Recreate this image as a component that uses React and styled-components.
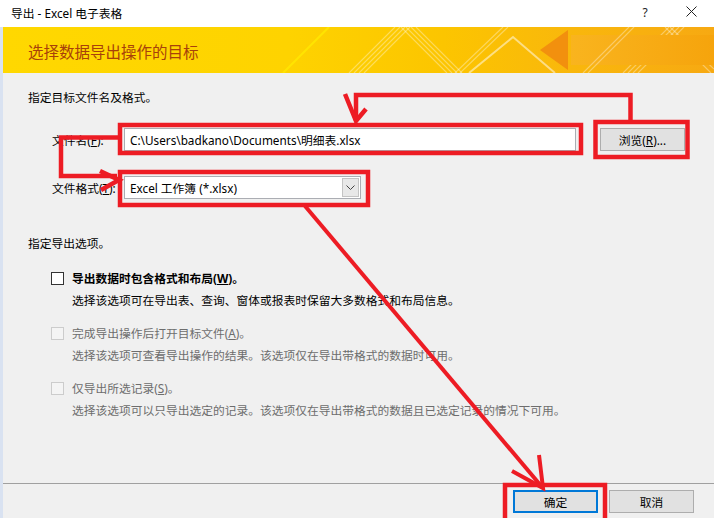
import React from 'react';
import styled, { createGlobalStyle } from 'styled-components';

const GlobalStyle = createGlobalStyle`
  html, body {
    margin: 0;
    padding: 0;
    background: #f0f0f0;
  }
  body {
    font-family: "Noto Sans", "Noto Sans CJK SC", sans-serif;
    font-size: 11.75px;
    color: #000;
  }
`;

const RED = '#ed1c24';

const options = [
  {
    label: '导出数据时包含格式和布局',
    key: 'W',
    desc: '选择该选项可在导出表、查询、窗体或报表时保留大多数格式和布局信息。',
    enabled: true,
  },
  {
    label: '完成导出操作后打开目标文件',
    key: 'A',
    desc: '选择该选项可查看导出操作的结果。该选项仅在导出带格式的数据时可用。',
    enabled: false,
  },
  {
    label: '仅导出所选记录',
    key: 'S',
    desc: '选择该选项可以只导出选定的记录。该选项仅在导出带格式的数据且已选定记录的情况下可用。',
    enabled: false,
  },
];

const App = () => {
  return (
    <Window>
      <GlobalStyle />
      <TitleBar>
        <Title>导出 - Excel 电子表格</Title>
        <TitleButtons>
          <HelpButton>?</HelpButton>
          <CloseButton>
            <svg width="11" height="11" viewBox="0 0 11 11">
              <path d="M0.5 0.5 L10.5 10.5 M10.5 0.5 L0.5 10.5" stroke="#222" strokeWidth="1" />
            </svg>
          </CloseButton>
        </TitleButtons>
      </TitleBar>

      <Body>
        <Banner>
          <BannerArt viewBox="0 0 711 46" preserveAspectRatio="none">
            <defs>
              <linearGradient id="band" x1="0" x2="1" y1="0" y2="0">
                <stop offset="0" stopColor="#f9b41e" />
                <stop offset="1" stopColor="#f6a40c" />
              </linearGradient>
            </defs>
            <g fill="none" stroke="#fff" strokeOpacity="0.35" strokeWidth="1.2">
              <path d="M346 46 L392 0 M351 46 L397 0 M356 46 L402 0 M361 46 L407 0" />
              <path d="M280 46 L326 0" stroke="#ffe800" strokeOpacity="0.8" strokeWidth="2" />
              <path d="M398 0 L444 46 M403 0 L449 46 M408 0 L454 46 M413 0 L459 46" />
              <path d="M466 46 L510 10 L552 46" strokeOpacity="0.5" strokeWidth="2" />
              <path d="M452 46 L500 0 M457 46 L505 0" />
              <path d="M620 46 L666 0 M625 46 L671 0 M630 46 L676 0 M635 46 L681 0" />
              <path d="M662 0 L708 46 M667 0 L711 42" />
            </g>
            <rect x="568" y="8" width="143" height="30" fill="url(#band)" />
            <path d="M537 23 L565 3 L565 43 Z" fill="#f2900e" />
            <g fill="none" stroke="#fff" strokeOpacity="0.35" strokeWidth="1.2">
              <path d="M580 46 L626 0 M585 46 L631 0" />
            </g>
          </BannerArt>
          <BannerText>选择数据导出操作的目标</BannerText>
        </Banner>

        <Main>
          <SectionTitle>指定目标文件名及格式。</SectionTitle>
          <Fields>
            <FieldLabel>文件名(<u>F</u>):</FieldLabel>
            <TextBox>C:\Users\badkano\Documents\明细表.xlsx</TextBox>
            <Button $side>浏览(<u>R</u>)...</Button>

            <FieldLabel>文件格式(<u>T</u>):</FieldLabel>
            <ComboBox>
              <ComboText>Excel 工作簿 (*.xlsx)</ComboText>
              <ComboArrow>
                <svg width="9" height="6" viewBox="0 0 9 6">
                  <path d="M0.5 0.5 L4.5 4.5 L8.5 0.5" fill="none" stroke="#444" strokeWidth="1" />
                </svg>
              </ComboArrow>
            </ComboBox>
          </Fields>

          <SectionTitle $gap={36}>指定导出选项。</SectionTitle>
          <OptionList>
            {options.map((o) => (
              <Option key={o.key}>
                <CheckRow>
                  <CheckBox $enabled={o.enabled} />
                  <OptionLabel $enabled={o.enabled}>
                    {o.label}(<u>{o.key}</u>)。
                  </OptionLabel>
                </CheckRow>
                <OptionDesc $enabled={o.enabled}>{o.desc}</OptionDesc>
              </Option>
            ))}
          </OptionList>
        </Main>

        <Footer>
          <Button $default>确定</Button>
          <Button>取消</Button>
        </Footer>
      </Body>

      {/* red annotation marks drawn over the dialog */}
      <Marks viewBox="0 0 714 518">
        <g fill="none" stroke={RED} strokeWidth="4.5" strokeLinejoin="miter">
          <rect x="120" y="125" width="461" height="28" />
          <rect x="595.5" y="122" width="92" height="35" />
          <rect x="120" y="172" width="248" height="33" />
          <rect x="505" y="485" width="100" height="40" />
          <path d="M630.5 122 L630.5 95 L356 95 L356 121" />
          <path d="M345 94 L356 121 L366 109" />
          <path d="M118 137.5 L61 137.5 L61 176 L117 176" />
          <path d="M100 171 L119 180 L101 190" />
          <path d="M305 206 L542 487" strokeWidth="4" />
          <path d="M539 455 L543 488 L512 471" strokeWidth="4" />
        </g>
      </Marks>
    </Window>
  );
};

export default App;

const Window = styled.div`
  position: relative;
  width: 714px;
  height: 518px;
  display: flex;
  flex-direction: column;
  overflow: hidden;
  background: #f0f0f0;
`;

const TitleBar = styled.div`
  height: 27px;
  flex-shrink: 0;
  display: flex;
  align-items: center;
  justify-content: space-between;
  background: #fff;
  padding: 0 0 0 11px;
`;

const Title = styled.div`
  font-size: 11.75px;
  color: #000;
  padding-bottom: 3px;
`;

const TitleButtons = styled.div`
  display: flex;
  align-items: center;
  height: 100%;
`;

const HelpButton = styled.div`
  width: 46px;
  text-align: center;
  font-size: 12px;
  color: #222;
  padding-bottom: 3px;
`;

const CloseButton = styled.div`
  width: 46px;
  display: flex;
  justify-content: center;
  padding-bottom: 4px;
`;

const Body = styled.div`
  flex: 1;
  display: flex;
  flex-direction: column;
  border-left: 3px solid #d9e2f1;
  min-height: 0;
`;

const Banner = styled.div`
  position: relative;
  height: 46px;
  flex-shrink: 0;
  display: flex;
  align-items: center;
  padding-left: 25px;
  background: linear-gradient(90deg, #ffd800 0%, #fed300 40%, #fcc500 62%, #f9b70c 80%, #f7a912 100%);
  overflow: hidden;
`;

const BannerArt = styled.svg`
  position: absolute;
  left: 0;
  top: 0;
  width: 100%;
  height: 100%;
`;

const BannerText = styled.div`
  position: relative;
  font-size: 15.5px;
  color: #a8410a;
  padding-top: 2px;
`;

const Main = styled.div`
  flex: 1;
  display: flex;
  flex-direction: column;
  padding: 16px 0 0 25px;
`;

const SectionTitle = styled.div`
  line-height: 16px;
  margin-top: ${(p) => p.$gap || 0}px;
`;

const Fields = styled.div`
  display: grid;
  grid-template-columns: 72px 452px auto;
  grid-template-rows: 23px 23px;
  row-gap: 25px;
  align-items: center;
  justify-items: start;
  margin: 23px 0 0 24px;
`;

const FieldLabel = styled.div`
  line-height: 16px;
`;

const TextBox = styled.div`
  width: 100%;
  height: 23px;
  box-sizing: border-box;
  border: 1px solid #abadb3;
  background: #fff;
  display: flex;
  align-items: center;
  padding-left: 5px;
  white-space: nowrap;
  overflow: hidden;
`;

const ComboBox = styled.div`
  width: 237px;
  height: 23px;
  box-sizing: border-box;
  border: 1px solid #abadb3;
  background: #fff;
  display: flex;
  align-items: center;
  justify-content: space-between;
  padding: 0 1px 0 5px;
`;

const ComboText = styled.span`
  white-space: nowrap;
`;

const ComboArrow = styled.div`
  width: 17px;
  height: 19px;
  box-sizing: border-box;
  border: 1px solid #c4c4c4;
  background: #e8e8e8;
  display: flex;
  align-items: center;
  justify-content: center;
`;

const Button = styled.div`
  width: 85px;
  height: 23px;
  box-sizing: border-box;
  margin-left: ${(p) => (p.$side ? 24 : 0)}px;
  border: ${(p) => (p.$default ? '2px solid #0078d7' : '1px solid #adadad')};
  background: #e1e1e1;
  display: flex;
  align-items: center;
  justify-content: center;
  font-size: 11.75px;
  color: #000;
`;

const OptionList = styled.div`
  display: flex;
  flex-direction: column;
  gap: 17px;
  margin: 19px 0 0 23px;
`;

const Option = styled.div`
  display: flex;
  flex-direction: column;
  gap: 6px;
`;

const CheckRow = styled.div`
  display: flex;
  align-items: center;
  gap: 8px;
  height: 16px;
`;

const CheckBox = styled.div`
  width: 13px;
  height: 13px;
  box-sizing: border-box;
  border: 1px solid ${(p) => (p.$enabled ? '#333' : '#cccccc')};
  background: ${(p) => (p.$enabled ? '#fff' : '#f4f4f4')};
`;

const OptionLabel = styled.div`
  line-height: 16px;
  font-weight: ${(p) => (p.$enabled ? 700 : 400)};
  color: ${(p) => (p.$enabled ? '#000' : '#6d6d6d')};
`;

const OptionDesc = styled.div`
  line-height: 16px;
  padding-left: 21px;
  color: ${(p) => (p.$enabled ? '#000' : '#6d6d6d')};
`;

const Footer = styled.div`
  height: 35px;
  flex-shrink: 0;
  box-sizing: border-box;
  border-top: 1px solid #a0a0a0;
  display: flex;
  justify-content: flex-end;
  align-items: flex-start;
  gap: 11px;
  padding: 6px 20px 0 0;
`;

const Marks = styled.svg`
  position: absolute;
  left: 0;
  top: 0;
  width: 714px;
  height: 518px;
  pointer-events: none;
`;
